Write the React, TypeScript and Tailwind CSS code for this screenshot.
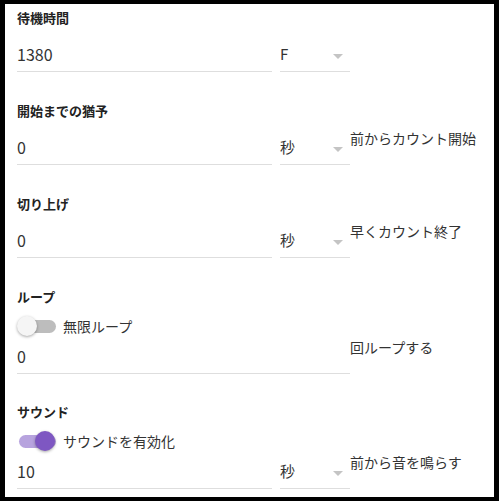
import React from "react"

// --- small building blocks ---
function Label({ children }: { children: React.ReactNode }) {
  return <div className="text-[13px] leading-5 font-bold text-[#222]">{children}</div>
}

function TextInput({ value, width }: { value: string; width: string }) {
  return (
    <div className={`${width} border-b border-[#dedede] pt-[6px] pb-[7px]`}>
      <div className="text-[16px] leading-5 text-[#333]">{value}</div>
    </div>
  )
}

function UnitSelect({ value }: { value: string }) {
  return (
    <div className="ml-2 w-[70px] border-b border-[#dedede] pt-[6px] pb-[7px] flex items-center justify-between">
      <span className="text-[15px] leading-5 text-[#333]">{value}</span>
      <svg width="10" height="5" viewBox="0 0 10 5" className="mr-[7px] mt-[5px]">
        <path d="M0 0 L10 0 L5 5 Z" fill="#c4c4c4" />
      </svg>
    </div>
  )
}

function Help({ children }: { children: React.ReactNode }) {
  return <div className="mt-[-3px] text-[14px] leading-5 text-[#333] whitespace-nowrap">{children}</div>
}

function Toggle({ on, label }: { on: boolean; label: string }) {
  return (
    <div className="mt-[5px] h-7 flex items-center">
      <div className="relative w-[40px] h-5 flex items-center">
        <div className={`w-[37px] h-[13px] ml-[2px] rounded-full ${on ? "bg-[#b7a3de]" : "bg-[#bdbdbd]"}`} />
        <div
          className={`absolute top-0 w-5 h-5 rounded-full shadow-[0_1px_3px_rgba(0,0,0,0.35)] ${
            on ? "left-[18px] bg-[#7e57c2]" : "left-0 bg-[#f5f5f5]"
          }`}
        />
      </div>
      <span className="ml-[6px] text-[14px] leading-5 text-[#333]">{label}</span>
    </div>
  )
}

export default function App() {
  return (
    <div className="w-[499px] h-[501px] box-border border-l-[5px] border-r-[5px] border-t-[4px] border-b-[4px] border-black bg-white font-['Noto_Sans_CJK_JP','Noto_Sans',sans-serif]">
      <div className="pl-3 pt-1">
        {/* 待機時間 */}
        <section>
          <Label>待機時間</Label>
          <div className="mt-[10px] flex items-start">
            <TextInput value="1380" width="w-[255px]" />
            <UnitSelect value="F" />
          </div>
        </section>

        {/* 開始までの猶予 */}
        <section className="mt-[29px]">
          <Label>開始までの猶予</Label>
          <div className="mt-[10px] flex items-start">
            <TextInput value="0" width="w-[255px]" />
            <UnitSelect value="秒" />
            <Help>前からカウント開始</Help>
          </div>
        </section>

        {/* 切り上げ */}
        <section className="mt-[29px]">
          <Label>切り上げ</Label>
          <div className="mt-[10px] flex items-start">
            <TextInput value="0" width="w-[255px]" />
            <UnitSelect value="秒" />
            <Help>早くカウント終了</Help>
          </div>
        </section>

        {/* ループ */}
        <section className="mt-[29px]">
          <Label>ループ</Label>
          <Toggle on={false} label="無限ループ" />
          <div className="flex items-start">
            <TextInput value="0" width="w-[333px]" />
            <Help>回ループする</Help>
          </div>
        </section>

        {/* サウンド */}
        <section className="mt-[28px]">
          <Label>サウンド</Label>
          <Toggle on={true} label="サウンドを有効化" />
          <div className="flex items-start">
            <TextInput value="10" width="w-[255px]" />
            <UnitSelect value="秒" />
            <Help>前から音を鳴らす</Help>
          </div>
        </section>
      </div>
    </div>
  )
}
